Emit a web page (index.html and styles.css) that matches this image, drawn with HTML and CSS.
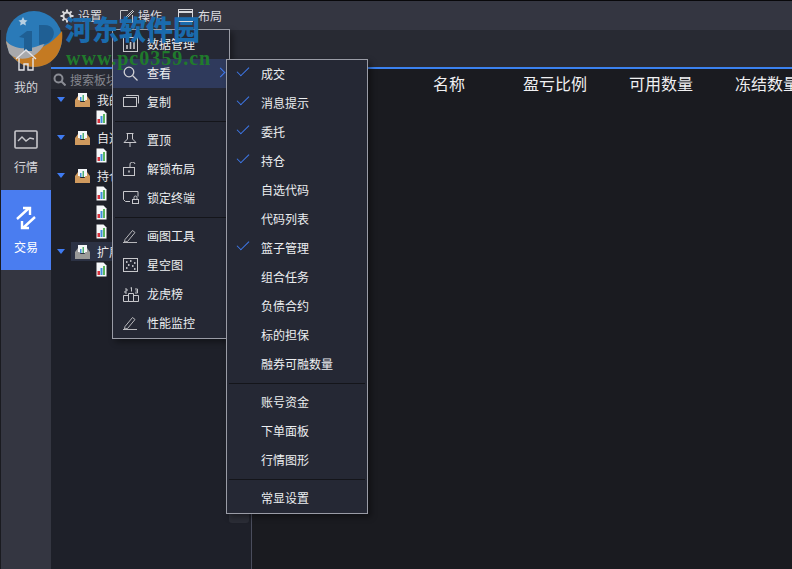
FILE: index.html
```html
<!DOCTYPE html>
<html lang="zh-CN">
<head>
<meta charset="UTF-8">
<title>交易</title>
<link rel="stylesheet" href="styles.css">
</head>
<body>

<svg class="defs" width="0" height="0">
    <symbol id="doc" viewBox="0 0 11 15">
        <path d="M.5.5h7l3 3v11H.5z" fill="#f6f8fa"/>
        <path d="M1.500 9h2.500v4H1.500z" fill="#d8323c"/>
        <path d="M4.500 6h2v7h-2z" fill="#3f8fdc"/>
        <path d="M7 4h2v9H7z" fill="#5ab860"/>
    </symbol>
    <symbol id="tray" viewBox="0 0 15 14">
        <path d="M3 0h9v8H3z" fill="#f4f6f8"/>
        <path d="M5 4h1.500v4H5z" fill="#3f8fdc"/>
        <path d="M7.500 2H9v6H7.500z" fill="#4fb070"/>
        <path d="M0 7h4.500l1 2h4l1-2H15v7H0z" fill="currentColor"/>
        <path d="M0 7 3 3v4zM15 7l-3-4v4z" fill="currentColor"/>
    </symbol>
</svg>

<div class="toolbar">
    <div class="tool tool-first">
        <svg width="14" height="14" viewBox="0 0 14 14"><circle cx="7" cy="7" r="3.600" fill="none" stroke="#d8d8dc" stroke-width="2"/><path d="M7 .5v2.500M7 11v2.500M.5 7H3M11 7h2.500M2.400 2.400l1.800 1.800M9.800 9.800l1.800 1.800M11.600 2.400 9.800 4.200M4.200 9.800l-1.800 1.800" stroke="#d8d8dc" stroke-width="2"/></svg>
        <span>设置</span>
    </div>
    <div class="tool">
        <svg width="14" height="14" viewBox="0 0 14 14" fill="none" stroke="#c8c8cc"><path d="M8 1.500H.5v12h12V6"/><path d="M13 1 6 8l-1 2 2-1 7-7"/></svg>
        <span>操作</span>
    </div>
    <div class="tool tool-last">
        <svg width="15" height="13" viewBox="0 0 15 13" fill="none" stroke="#d8d8dc"><rect x=".5" y=".5" width="14" height="12"/><path d="M1 3h13" stroke-width="2"/><path d="M1 9.500h13"/></svg>
        <span>布局</span>
    </div>
</div>

<div class="app">
    <div class="rail">
        <div class="rail-item rail-home">
            <svg width="22" height="23" viewBox="0 0 22 23" fill="none" stroke="#e4e4e8" stroke-width="1.400"><path d="M1 11 11 2l10 9"/><path d="M4 10v12h5v-6h4v6h5V10"/></svg>
            <span>我的</span>
        </div>
        <div class="rail-item rail-market">
            <svg width="24" height="19" viewBox="0 0 24 19" fill="none" stroke="#c8c8cc"><rect x="1" y="1" width="22" height="17" rx="1" stroke-width="1.600"/><path d="M4 11l4-4 4 4 4-3 4 1" stroke-width="1.400"/></svg>
            <span>行情</span>
        </div>
        <div class="rail-item rail-trade">
            <svg width="22" height="24" viewBox="0 0 22 24" fill="none" stroke="#fff" stroke-width="2.400"><path d="M2 13 14 2M8 2h7v7"/><path d="M20 11 8 22M14 22H7v-7"/></svg>
            <span>交易</span>
        </div>
    </div>

    <div class="side">
        <div class="search">
            <svg width="13" height="13" viewBox="0 0 13 13" fill="none" stroke="#8a8c94" stroke-width="2"><circle cx="5.500" cy="5.500" r="4"/><path d="m8.500 8.500 4 4"/></svg>
            <span>搜索板块</span>
        </div>
        <div class="tree">
            <div class="node node-top"><i class="arrow"></i><svg class="box"><use href="#tray"/></svg><span>我的</span></div>
            <div class="node node-leaf"><svg class="file"><use href="#doc"/></svg></div>
            <div class="node node-top"><i class="arrow"></i><svg class="box"><use href="#tray"/></svg><span>自选</span></div>
            <div class="node node-leaf"><svg class="file"><use href="#doc"/></svg></div>
            <div class="node node-top"><i class="arrow"></i><svg class="box"><use href="#tray"/></svg><span>持仓</span></div>
            <div class="node node-leaf"><svg class="file"><use href="#doc"/></svg></div>
            <div class="node node-leaf"><svg class="file"><use href="#doc"/></svg></div>
            <div class="node node-leaf"><svg class="file"><use href="#doc"/></svg></div>
            <div class="node node-top node-selected"><i class="arrow"></i><svg class="box box-grey"><use href="#tray"/></svg><span>扩展</span></div>
            <div class="node node-leaf"><svg class="file"><use href="#doc"/></svg></div>
        </div>
        <div class="scroll-stub"></div>
    </div>

    <div class="main">
        <div class="subbar"></div>
        <div class="grid-head">
            <span class="col-name">名称</span>
            <span class="col-ratio">盈亏比例</span>
            <span class="col-avail">可用数量</span>
            <span class="col-frozen">冻结数量</span>
        </div>
    </div>
</div>

<div class="menu menu-main">
    <div class="item"><svg width="15" height="15" viewBox="0 0 15 15" fill="none" stroke="#c8c8cc"><rect x=".5" y=".5" width="14" height="14"/><path d="M4 12V8M7.500 12V5M11 12V3" stroke-width="1.600"/></svg><span>数据管理</span></div>
    <div class="item item-hover"><svg width="15" height="15" viewBox="0 0 15 15" fill="none" stroke="#d0d0d4" stroke-width="1.300"><circle cx="6" cy="6" r="4.800"/><path d="m9.500 9.500 5 5"/></svg><span>查看</span><b class="chev"></b></div>
    <div class="item"><svg width="16" height="12" viewBox="0 0 16 12" fill="none" stroke="#c8c8cc"><rect x=".5" y="2.500" width="13" height="9"/><path d="M3 .5h12.500v8"/></svg><span>复制</span></div>
    <div class="sep"></div>
    <div class="item"><svg width="14" height="14" viewBox="0 0 14 14" fill="none" stroke="#c8c8cc"><path d="M3.500.5h7M4.500 1v5L1 9.500h12L9.500 6V1M7 10v4"/></svg><span>置顶</span></div>
    <div class="item"><svg width="14" height="14" viewBox="0 0 14 14" fill="none" stroke="#c8c8cc"><rect x=".5" y="5.500" width="11" height="8"/><path d="M6 8.500v2" stroke-width="1.500"/><path d="M7 5V3a2.500 2.500 0 0 1 5-1"/></svg><span>解锁布局</span></div>
    <div class="item"><svg width="16" height="13" viewBox="0 0 16 13" fill="none" stroke="#c8c8cc"><path d="M7 10.500H2.500l-2-2V.5h14.500v5"/><rect x="9.500" y="8.500" width="6" height="4"/><path d="M11 8V6.500a1.500 1.500 0 0 1 3 0V8"/></svg><span>锁定终端</span></div>
    <div class="sep"></div>
    <div class="item"><svg width="14" height="14" viewBox="0 0 14 14" fill="none" stroke="#b8b8bc"><path d="M2 10.500 9.500 1.500l2.500 2-7.500 9-3 .5zM0 13.500h14"/></svg><span>画图工具</span></div>
    <div class="item"><svg width="15" height="14" viewBox="0 0 15 14" fill="none" stroke="#c8c8cc"><rect x=".5" y=".5" width="14" height="13"/><path d="M3 4h1.500M7 3h1.500M11 5h1.500M5 7h1.500M9 8h1.500M3 10h1.500M11 11h1.500" stroke="#e8e8ec" stroke-width="1.500"/></svg><span>星空图</span></div>
    <div class="item"><svg width="16" height="15" viewBox="0 0 16 15" fill="none" stroke="#c8c8cc"><path d="M.5 14.500v-6h5v6zM5.500 14.500v-8h5v8zM10.500 14.500v-6h5v6z"/><path d="M2 2h2v2H2v2h2M7.500 1 8.500.5v4M12 2h2.500v4H12M12.500 4h2"/></svg><span>龙虎榜</span></div>
    <div class="item"><svg width="14" height="14" viewBox="0 0 14 14" fill="none" stroke="#b8b8bc"><path d="M2 10.500 9.500 1.500l2.500 2-7.500 9-3 .5zM0 13.500h14"/></svg><span>性能监控</span></div>
</div>

<div class="menu menu-view">
    <div class="item on"><span>成交</span></div>
    <div class="item on"><span>消息提示</span></div>
    <div class="item on"><span>委托</span></div>
    <div class="item on"><span>持仓</span></div>
    <div class="item"><span>自选代码</span></div>
    <div class="item"><span>代码列表</span></div>
    <div class="item on"><span>篮子管理</span></div>
    <div class="item"><span>组合任务</span></div>
    <div class="item"><span>负债合约</span></div>
    <div class="item"><span>标的担保</span></div>
    <div class="item"><span>融券可融数量</span></div>
    <div class="sep"></div>
    <div class="item"><span>账号资金</span></div>
    <div class="item"><span>下单面板</span></div>
    <div class="item"><span>行情图形</span></div>
    <div class="sep"></div>
    <div class="item"><span>常显设置</span></div>
</div>

<div class="watermark">
    <svg class="wm-logo" width="58" height="56" viewBox="0 0 58 56">
        <circle cx="29" cy="28" r="28" fill="#2a7ab8"/>
        <path d="M1 30C12 44 38 44 57 20c2 16-6 36-28 36C14 56 3 44 1 30z" fill="#c47a22"/>
        <path d="M1 30C6 36 20 42 40 32 30 52 10 50 4 42z" fill="#a8a9ac"/>
        <path d="M14 26l8-6h5v20h-8V27zM34 14h5c10 0 12 8 8 14-3 4-6 5-13 6z" fill="#1f5f94"/>
        <path d="m18 6 1.500 3 3 .5-2.200 2 .6 3-2.900-1.500-2.900 1.500.6-3-2.200-2 3-.5z" fill="#b8d0e2"/>
    </svg>
    <div class="wm-cn">河东软件园</div>
    <div class="wm-url">www.pc0359.cn</div>
</div>

</body>
</html>
```

FILE: styles.css
```css
body {
    margin: 0;
    width: 792px;
    height: 569px;
    overflow: hidden;
    background-color: #1a1b20;
    font-family: "Noto Sans CJK SC", "Liberation Sans", sans-serif;
    font-size: 12px;
    color: #e8e8ea;
    border-top: 1px solid #08080a;
    box-sizing: border-box;
}

svg {
    display: block;
    flex: none;
}

.defs {
    position: absolute;
}

.toolbar {
    display: flex;
    align-items: center;
    height: 29px;
    padding-left: 60px;
    background-color: #343641;
}

.tool {
    display: flex;
    align-items: center;
    gap: 4px;
    margin-right: 16px;
    color: #dcdce0;
    line-height: 16px;
}

.tool-first {
    margin-right: 18px;
}

.tool-last {
    gap: 5px;
}

.app {
    display: flex;
    height: 539px;
}

.rail {
    width: 50px;
    margin-left: 1px;
    flex: none;
    background-color: #343641;
}

.rail-item {
    display: flex;
    flex-direction: column;
    align-items: center;
    height: 80px;
    box-sizing: border-box;
    color: #d8d8dc;
    line-height: 16px;
}

.rail-home {
    position: relative;
    z-index: 2;
    height: 100px;
    padding-top: 18px;
    gap: 8px;
}

.rail-market {
    height: 60px;
    gap: 10px;
}

.rail-trade {
    padding-top: 16px;
    gap: 9px;
    background-color: #4a7df0;
    color: #fff;
}

.side {
    position: relative;
    width: 200px;
    flex: none;
    background-color: #1e2029;
    border-right: 1px solid #4a4d5c;
    margin-top: 39px;
}

.side::before {
    content: "";
    position: absolute;
    left: 0;
    right: -1px;
    top: -39px;
    height: 39px;
    background-color: #282a33;
    border-bottom: 2px solid #3b82f0;
    box-sizing: border-box;
}

.search {
    display: flex;
    align-items: center;
    gap: 4px;
    height: 20px;
    padding-left: 2px;
    background-color: #282a33;
    color: #85878f;
}

.tree {
    padding-top: 1px;
}

.node {
    display: flex;
    align-items: center;
    height: 19px;
    line-height: 16px;
    color: #e8e8ea;
}

.node-top {
    padding-left: 6px;
}

.node-top span {
    margin-left: 7px;
}

.node-leaf {
    box-sizing: border-box;
    padding-left: 45px;
    padding-bottom: 2px;
}

.node-selected {
    background: linear-gradient(to right, transparent 20px, #2c3244 20px);
}

.arrow {
    width: 0;
    height: 0;
    margin-right: 10px;
    border-left: 4px solid transparent;
    border-right: 4px solid transparent;
    border-top: 5px solid #3f7bf2;
}

.box {
    width: 15px;
    height: 14px;
    color: #d09a5e;
}

.box-grey {
    color: #9a9a98;
}

.file {
    width: 11px;
    height: 15px;
}

.scroll-stub {
    position: absolute;
    right: 2px;
    top: 400px;
    width: 20px;
    height: 54px;
    background-color: #2b2d36;
    border-radius: 3px;
}

.main {
    flex: 1;
    min-width: 0;
    overflow: hidden;
}

.subbar {
    height: 39px;
    box-sizing: border-box;
    background-color: #282a33;
    border-bottom: 2px solid #3b82f0;
}

.grid-head {
    display: flex;
    height: 28px;
    align-items: center;
    font-size: 16px;
    color: #f0f0f2;
    white-space: nowrap;
}

.col-name {
    margin-left: 181px;
}

.col-ratio {
    margin-left: 58px;
}

.col-avail {
    margin-left: 42px;
}

.col-frozen {
    margin-left: 42px;
}

.menu {
    position: absolute;
    box-sizing: border-box;
    background-color: #252834;
    border: 1px solid #9a9ca6;
    box-shadow: 3px 3px 6px rgba(0, 0, 0, 0.4);
    line-height: 16px;
}

.menu-main {
    left: 112px;
    top: 29px;
    width: 118px;
    height: 310px;
}

.menu-view {
    left: 226px;
    top: 59px;
    width: 142px;
    height: 455px;
}

.item {
    position: relative;
    display: flex;
    align-items: center;
    box-sizing: border-box;
    height: 29px;
    padding-left: 34px;
    padding-bottom: 2px;
    color: #eceef0;
}

.item svg {
    position: absolute;
    left: 10px;
    top: 7px;
}

.item-hover {
    background-color: #2f3a5c;
}

.chev {
    position: absolute;
    right: 5px;
    top: 10px;
    width: 6px;
    height: 6px;
    border-top: 1px solid #3f7bf2;
    border-right: 1px solid #3f7bf2;
    transform: rotate(45deg);
}

.sep {
    height: 1px;
    margin: 4px 2px;
    background-color: #14151a;
}

.on::before {
    content: "";
    position: absolute;
    left: 10px;
    top: 7px;
    width: 11px;
    height: 5px;
    border-left: 1.5px solid #3f7bf2;
    border-bottom: 1.5px solid #3f7bf2;
    transform: rotate(-45deg);
}

.watermark {
    position: absolute;
    left: 5px;
    top: 11px;
    width: 200px;
    height: 60px;
    pointer-events: none;
}

.wm-logo {
    position: absolute;
    left: 0;
    top: 0;
}

.wm-cn {
    position: absolute;
    left: 60px;
    top: 0;
    font-size: 27px;
    line-height: 36px;
    font-weight: 900;
    color: #1a6bad;
    white-space: nowrap;
}

.wm-url {
    position: absolute;
    left: 61px;
    top: 35px;
    font-family: "Liberation Serif", serif;
    font-size: 20px;
    line-height: 24px;
    font-weight: 700;
    letter-spacing: 1px;
    color: #207a2c;
    white-space: nowrap;
}
```
